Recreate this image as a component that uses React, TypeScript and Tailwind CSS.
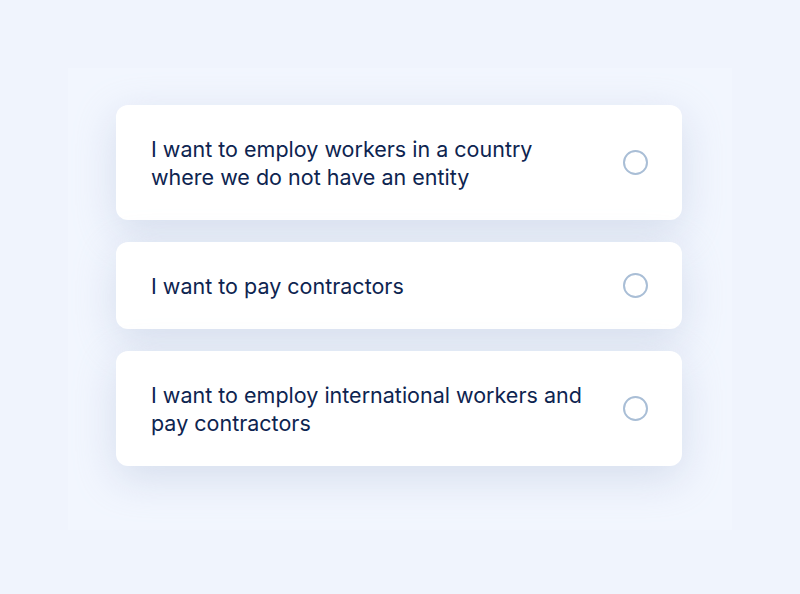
const options = [
  "I want to employ workers in a country where we do not have an entity",
  "I want to pay contractors",
  "I want to employ international workers and pay contractors",
];

export default function App() {
  return (
    <div className="flex min-h-screen w-full items-start justify-center bg-[#f0f4fd] pt-[68px] font-['Inter',sans-serif]">
      {/* panel clips the card shadows */}
      <div className="flex h-[462px] w-[664px] flex-col gap-[22px] overflow-hidden bg-[#f2f6fe] pl-[48px] pr-[50px] pt-[37px]">
        {options.map((label) => (
          <div
            key={label}
            className="flex items-center rounded-[12px] bg-white py-[29.5px] pl-[35px] pr-[34px] shadow-[0_12px_40px_rgba(180,192,218,0.45)]"
          >
            <p className="w-[442px] text-[21.5px] leading-[28px] font-normal text-[#0d2450]">
              {label}
            </p>
            <div className="ml-auto h-[25px] w-[25px] rounded-full border-2 border-[#a9bed6]" />
          </div>
        ))}
      </div>
    </div>
  );
}
